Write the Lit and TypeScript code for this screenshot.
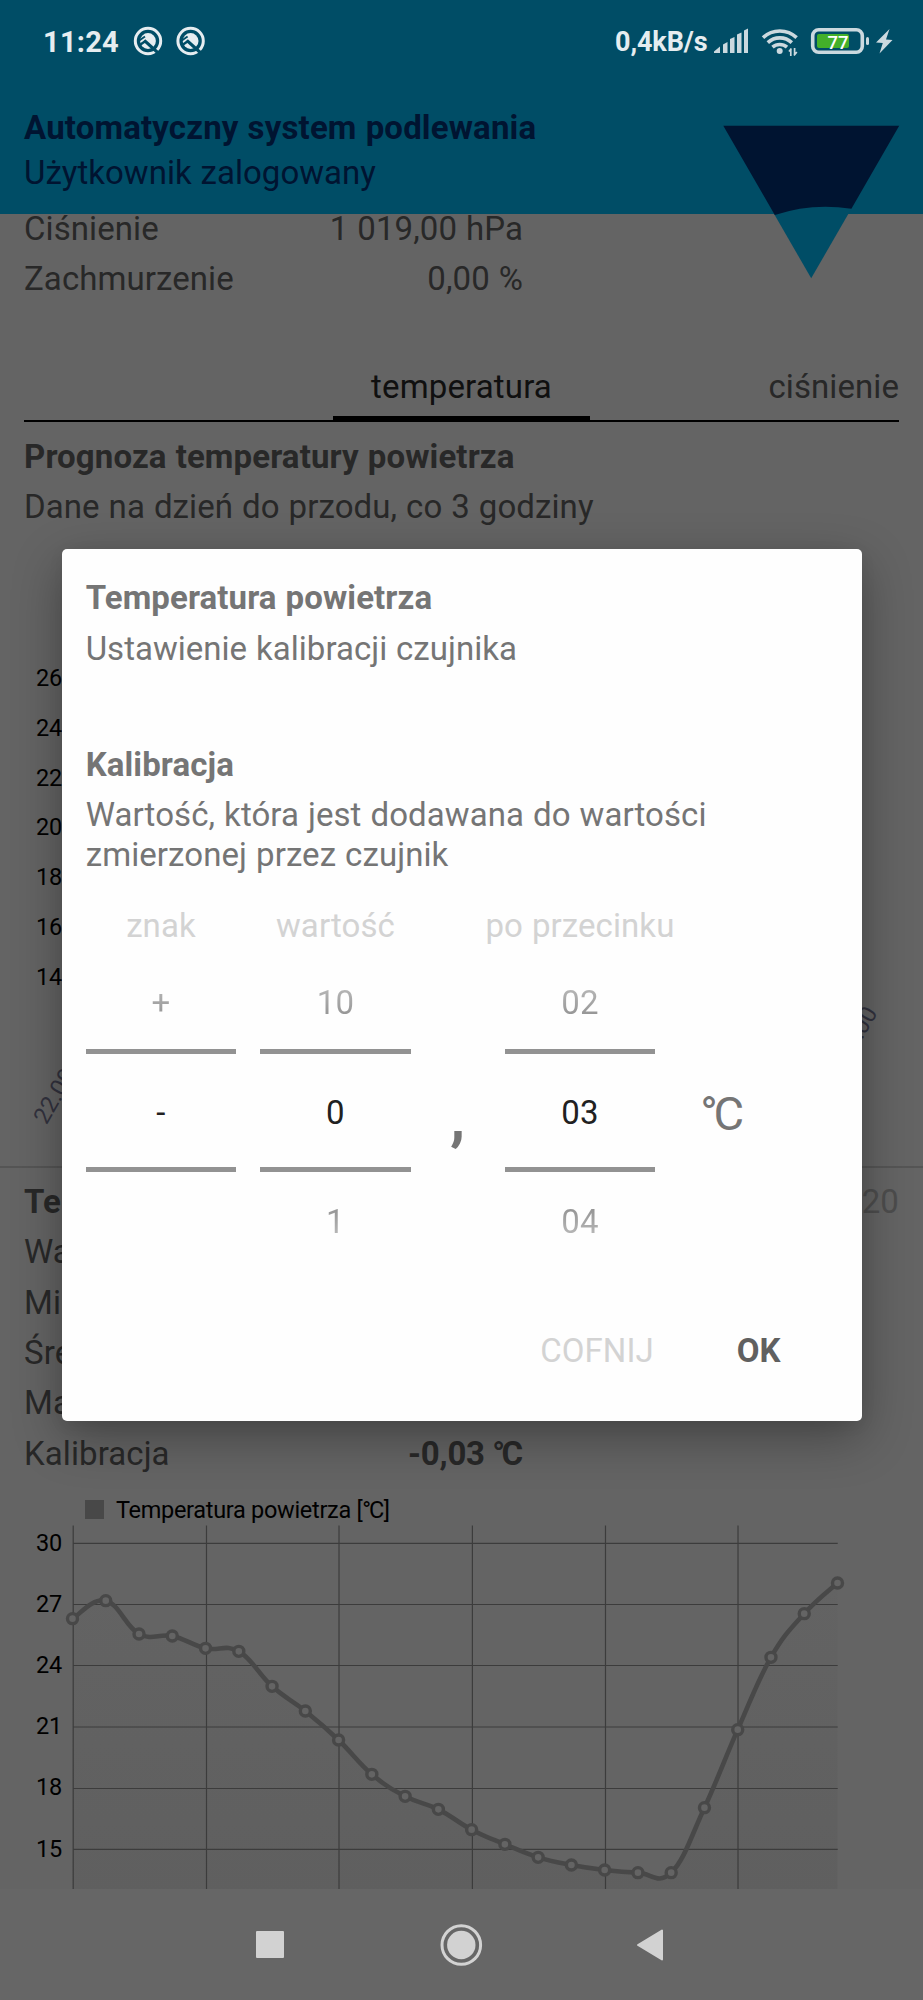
import { LitElement, html, svg, css } from "lit";
import { customElement, property } from "lit/decorators.js";

const FONT = css`Roboto, "Noto Sans", sans-serif`;

@customElement("status-bar")
class StatusBar extends LitElement {
  static styles = css`
    :host { display: flex; justify-content: space-between; height: 82px; padding: 0 29px 0 43px; color: #e6edf0; font-family: ${FONT}; box-sizing: border-box; }
    .side { display: flex; align-items: flex-start; }
    .time { font-size: 29px; font-weight: 700; line-height: 34px; margin-top: 25px; width: 90px; letter-spacing: 0.25px; white-space: nowrap; }
    .speed { font-size: 27px; font-weight: 700; line-height: 32px; margin-top: 26px; width: 99px; letter-spacing: -0.1px; white-space: nowrap; }
    .badges { width: 74px; height: 82px; }
    .icons { width: 180px; height: 82px; }
    .pct { font: 500 18.5px Roboto, sans-serif; }
  `;
  private badge(x: number) {
    return svg`<g transform="translate(${x} 41)">
      <circle r="12.7" fill="none" stroke="#e6edf0" stroke-width="3"></circle>
      <circle r="7.9" fill="#e6edf0"></circle>
      <path d="M-3.8 -0.6 L10.5 12.2" fill="none" stroke="#004d66" stroke-width="3.2"></path>
      <path d="M-9.5 0 L-3 -4.6" fill="none" stroke="#004d66" stroke-width="1.8"></path>
      <path d="M-9 4.6 L-2.8 0.2" fill="none" stroke="#004d66" stroke-width="2.4"></path>
    </g>`;
  }
  render() {
    return html`
      <div class="side">
        <span class="time">11:24</span>
        <svg class="badges" viewBox="133 0 74 82">${this.badge(148)}${this.badge(190.6)}</svg>
      </div>
      <div class="side">
        <span class="speed">0,4kB/s</span>
        <svg class="icons" viewBox="713 0 180 82">
          <g fill="#cbd9df">
            <path d="M713 51.5 L719 46.5 V53 H713Z"></path>
            <path d="M722 44.5 L726.5 42 V53 H722Z"></path>
            <path d="M729 39 L733.5 37 V53 H729Z"></path>
            <path d="M736 34.5 L740.5 32.5 V53 H736Z"></path>
            <path d="M743 30.5 L747 28.5 V53 H743Z"></path>
          </g>
          <g fill="none" stroke="#cbd9df" stroke-width="3.6">
            <path d="M762 37.6 A24.5 24.5 0 0 1 795.6 37.6"></path>
            <path d="M766.8 42.6 A17.6 17.6 0 0 1 790.8 42.6"></path>
            <path d="M771.5 47.2 A11 11 0 0 1 786 47.2"></path>
          </g>
          <circle cx="778.7" cy="51" r="3" fill="#cbd9df"></circle>
          <path d="M789.8 49 V56 M788 51.5 L790.4 48.5 M793.6 48 V55 M795.8 52 L793 55.5" stroke="#cbd9df" stroke-width="1.7" fill="none"></path>
          <rect x="811.7" y="29.7" width="49.6" height="22.6" rx="6" fill="none" stroke="#cbd9df" stroke-width="3.6"></rect>
          <rect x="816" y="34" width="32" height="14" rx="2" fill="#43b02a"></rect>
          <rect x="865" y="37" width="3" height="8" rx="1.5" fill="#cbd9df"></rect>
          <text class="pct" x="837" y="48.6" text-anchor="middle" fill="#ffffff">77</text>
          <path d="M888.5 29 L875 42.5 L881.8 43 L878.5 53.5 L891.5 40 L885 39.5Z" fill="#cbd9df"></path>
        </svg>
      </div>`;
  }
}

@customElement("app-header")
class AppHeader extends LitElement {
  static styles = css`
    :host { display: flex; flex-direction: column; position: relative; z-index: 1; height: 131.5px; padding: 22.7px 24px 0; box-sizing: border-box; color: #001431; font-family: ${FONT}; font-size: 33px; }
    .title { font-weight: 700; line-height: 45px; letter-spacing: 0.15px; }
    .user { line-height: 45px; letter-spacing: 0.02px; }
    .logo { position: absolute; right: 23px; top: 43px; width: 177px; height: 154px; }
  `;
  render() {
    return html`
      <div class="title">Automatyczny system podlewania</div>
      <div class="user">Użytkownik zalogowany</div>
      <svg class="logo" viewBox="723 125 177 154">
        <path d="M723.3 125.7 H899.2 L811.2 278.3Z" fill="#004d66"></path>
        <path d="M723.3 125.7 H899.2 L851.4 208.8 Q812 202.5 774.8 215Z" fill="#001431"></path>
      </svg>`;
  }
}

@customElement("forecast-chart")
class ForecastChart extends LitElement {
  static styles = css`
    :host { display: block; height: 634px; letter-spacing: 0; word-spacing: 0; }
    svg { display: block; width: 923px; height: 634px; }
    text { font: 23.5px Roboto, sans-serif; }
  `;
  render() {
    return html`<svg viewBox="0 532 923 634">
      ${[26, 24, 22, 20, 18, 16, 14].map((v, i) => svg`<text x="62.3" y=${686.3 + i * 49.7} text-anchor="end" fill="#000">${v}</text>`)}
      <text transform="translate(46.5 1125.5) rotate(-60)" fill="#32323e">22.09 12:00</text>
      <text transform="translate(878 1012.5) rotate(-60)" text-anchor="end" fill="#32323e">23.09 12:00</text>
    </svg>`;
  }
}

@customElement("history-chart")
class HistoryChart extends LitElement {
  @property({ attribute: false }) offsets = [
    386, 332, 432, 438, 475, 484, 589, 663, 750, 853, 919, 958,
    1019, 1063, 1102, 1125, 1140, 1148, 1148, 953, 719, 502, 371, 279,
  ];
  static styles = css`
    :host { display: block; height: 411px; letter-spacing: 0; word-spacing: 0; }
    svg { display: block; width: 923px; height: 411px; }
    text { font: 23.5px Roboto, sans-serif; fill: #000; }
    .legend { letter-spacing: -0.3px; }
    .degree { letter-spacing: -2.2px; }
  `;
  render() {
    const p = this.offsets.map((o, i) => [72.5 + (i * 765) / 23, 1490 + o / 3]);
    const at = (i: number) => p[Math.max(0, Math.min(p.length - 1, i))];
    let d = `M${p[0][0]} ${p[0][1]}`;
    for (let i = 1; i < p.length; i++) {
      const [a, b, c, e] = [at(i - 2), at(i - 1), at(i), at(i + 1)];
      const k = 0.2;
      d += `C${b[0] + (c[0] - a[0]) * k} ${b[1] + (c[1] - a[1]) * k} ${c[0] - (e[0] - b[0]) * k} ${c[1] - (e[1] - b[1]) * k} ${c[0]} ${c[1]}`;
    }
    return html`<svg viewBox="0 1478 923 411">
      <defs><linearGradient id="fade" x1="0" y1="0" x2="0" y2="1">
        <stop offset="0" stop-color="#636363"></stop><stop offset="1" stop-color="#5f5f5f"></stop>
      </linearGradient></defs>
      <path d="${d}V1900H72.5Z" fill="url(#fade)"></path>
      <rect x="85" y="1500" width="19" height="19" fill="#484848"></rect>
      <text class="legend" x="116" y="1518">Temperatura powietrza [<tspan class="degree">°</tspan>C]</text>
      <g stroke="#3c3c3c" stroke-width="1.2">
        ${[73.2, 206.5, 339, 472.4, 605.5, 738].map((x) => svg`<path d="M${x} 1525.5V1889"></path>`)}
        ${[1543.3, 1604.5, 1665.5, 1727, 1788.5, 1849.4].map((y) => svg`<path d="M73 ${y}H837.7"></path>`)}
      </g>
      ${[30, 27, 24, 21, 18, 15].map((v, i) => svg`<text x="62.3" y=${1550.6 + i * 61.2} text-anchor="end">${v}</text>`)}
      <path d=${d} fill="none" stroke="#484848" stroke-width="4.6"></path>
      ${p.map(([x, y]) => svg`<circle cx=${x} cy=${y} r="5" fill="#646464" stroke="#484848" stroke-width="3.4"></circle>`)}
    </svg>`;
  }
}

@customElement("number-wheel")
class NumberWheel extends LitElement {
  @property() label = "";
  @property() before = "";
  @property() value = "";
  @property() after = "";
  static styles = css`
    :host { display: flex; flex-direction: column; width: 150.5px; align-items: center; font-size: 33px; }
    .label { line-height: 50px; color: #d3d3d3; white-space: nowrap; }
    .cell { line-height: 50px; height: 50px; background-clip: text; color: transparent; }
    .before { margin-top: 27.6px; background-image: linear-gradient(#c4c4c4, #858585); }
    .after { margin-top: 25.3px; background-image: linear-gradient(#858585, #c8c8c8); }
    .value { box-sizing: border-box; width: 100%; margin-top: 20.8px; height: 123px; line-height: 118px; text-align: center; color: #212121; border: solid #929292; border-width: 5px 0; }
  `;
  render() {
    return html`
      <div class="label">${this.label}</div>
      <div class="cell before">${this.before}</div>
      <div class="value">${this.value}</div>
      <div class="cell after">${this.after}</div>`;
  }
}

@customElement("calibration-dialog")
class CalibrationDialog extends LitElement {
  static styles = css`
    :host { display: flex; flex-direction: column; box-sizing: border-box; background: #fefefe; border-radius: 5px; padding: 24px 24px 0; color: #757575; font-family: ${FONT}; font-size: 33px; box-shadow: 0 16px 50px rgba(0, 0, 0, 0.32), 0 4px 16px rgba(0, 0, 0, 0.06); }
    .line { line-height: 50.5px; letter-spacing: 0.02px; }
    .strong { font-weight: 700; letter-spacing: 0.1px; }
    .gap { margin-top: 65.5px; }
    .desc { line-height: 39.5px; padding: 5px 0; }
    .wheels { display: flex; margin-top: 21.6px; }
    .second { margin-left: 24px; }
    .comma { width: 94px; text-align: center; font-size: 62px; font-weight: 700; line-height: 60px; padding-top: 186.2px; box-sizing: border-box; }
    .unit { font-size: 47px; line-height: 56px; margin-left: 45px; padding-top: 185.5px; }
    .degree { letter-spacing: -0.09em; }
    .actions { display: flex; justify-content: flex-end; gap: 83px; padding-right: 57px; margin-top: 78.3px; line-height: 50px; }
    .back { color: #d3d3d3; }
    .ok { color: #606060; font-weight: 700; }
  `;
  render() {
    return html`
      <div class="line strong">Temperatura powietrza</div>
      <div class="line">Ustawienie kalibracji czujnika</div>
      <div class="line strong gap">Kalibracja</div>
      <div class="desc">Wartość, która jest dodawana do wartości<br />zmierzonej przez czujnik</div>
      <div class="wheels">
        <number-wheel label="znak" before="+" value="-"></number-wheel>
        <number-wheel class="second" label="wartość" before="10" value="0" after="1"></number-wheel>
        <div class="comma">,</div>
        <number-wheel label="po przecinku" before="02" value="03" after="04"></number-wheel>
        <div class="unit"><span class="degree">°</span>C</div>
      </div>
      <div class="actions"><span class="back">COFNIJ</span><span class="ok">OK</span></div>`;
  }
}

@customElement("app-root")
class AppRoot extends LitElement {
  static styles = css`
    :host { display: flex; flex-direction: column; position: relative; width: 923px; height: 2000px; overflow: hidden; background: #646464; font-family: ${FONT}; font-size: 33px; letter-spacing: 0.08px; word-spacing: 0.7px; color: #282828; }
    .top { background: #004d66; flex: none; height: 213.5px; }
    .content { height: 1675.5px; flex: none; }
    .rows { padding: 0 24px; }
    .first { margin-top: -9.5px; }
    .row { display: flex; height: 50.4px; line-height: 50.4px; white-space: nowrap; }
    .name { width: 260px; }
    .val { width: 239px; text-align: right; }
    .date { margin-left: auto; color: #4d4d4d; }
    .strong { font-weight: 700; letter-spacing: 0.12px; }
    .val.strong { letter-spacing: -0.2px; word-spacing: -0.5px; }
    .degree { letter-spacing: -0.11em; }
    .tabs { display: grid; grid-template-columns: 1fr 257px 1fr; margin: 57.2px 24px 0; height: 60px; box-sizing: border-box; border-bottom: 2.5px solid #000; line-height: 50px; }
    .tab { text-align: center; color: #101010; letter-spacing: 0.15px; border-bottom: 5px solid #000; height: 54px; }
    .next { text-align: right; }
    .forecast { margin-top: 9.6px; }
    .sensors { border-top: 2px solid #555; padding-top: 9.2px; margin-top: -0.8px; height: 252px; margin-bottom: 49.4px; }
    .dialog { position: absolute; left: 61.7px; top: 549px; width: 800px; height: 872.3px; }
    .nav { height: 111px; background: #666; position: relative; }
    .nav svg { display: block; width: 923px; height: 111px; }
  `;
  private row(name: string, value: unknown = "", strong = false) {
    return html`<div class="row"><span class="name">${name}</span><span class="val ${strong ? "strong" : ""}">${value}</span></div>`;
  }
  render() {
    return html`
      <div class="top"><status-bar></status-bar><app-header></app-header></div>
      <div class="content">
        <div class="rows first">${this.row("Ciśnienie", "1 019,00 hPa")}${this.row("Zachmurzenie", "0,00 %")}</div>
        <div class="tabs"><span></span><span class="tab">temperatura</span><span class="next">ciśnienie</span></div>
        <div class="rows forecast">
          <div class="row strong">Prognoza temperatury powietrza</div>
          <div class="row">Dane na dzień do przodu, co 3 godziny</div>
        </div>
        <forecast-chart></forecast-chart>
        <div class="rows sensors">
          <div class="row"><span class="strong">Temperatura</span><span class="date">11:20</span></div>
          ${this.row("Wartość")}${this.row("Minimum")}${this.row("Średnia")}${this.row("Maksimum")}${this.row("Kalibracja", html`-0,03 <span class="degree">°</span>C`, true)}
        </div>
        <history-chart></history-chart>
      </div>
      <div class="nav">
        <svg viewBox="0 1889 923 111" fill="#d2d2d2">
          <rect x="256" y="1931" width="28" height="27" rx="1"></rect>
          <circle cx="461.3" cy="1945" r="14.2"></circle>
          <circle cx="461.3" cy="1945" r="19.3" fill="none" stroke="#d2d2d2" stroke-width="3"></circle>
          <path d="M638 1945 L662 1930.500 V1959.500Z" stroke="#d2d2d2" stroke-width="2" stroke-linejoin="round"></path>
        </svg>
      </div>
      <calibration-dialog class="dialog"></calibration-dialog>`;
  }
}
